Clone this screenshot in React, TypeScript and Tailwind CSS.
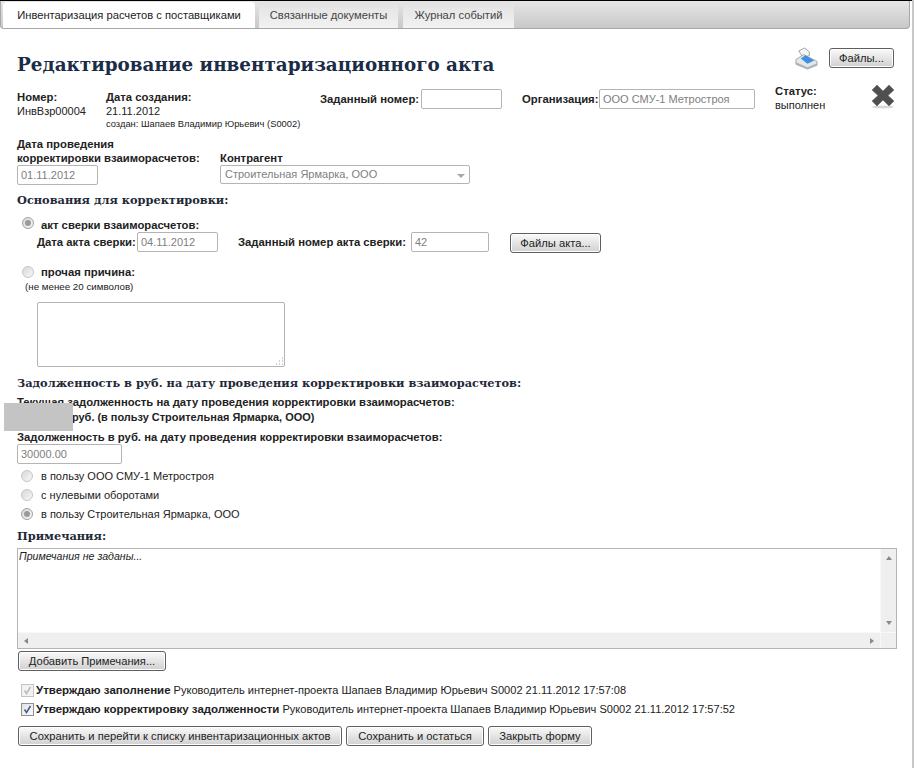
const sans = "font-['Liberation_Sans',Arial,sans-serif]";

const Field = ({ value, className }: { value?: string; className: string }) => (
  <div className={`h-[20px] border border-[#b4b4b4] rounded-[2px] bg-white pl-[3px] text-[11px] leading-[19px] text-[#808080] ${className}`}>
    {value}
  </div>
);

const Btn = ({ label, className }: { label: string; className: string }) => (
  <button className={`h-[20px] border border-[#5f5f5f] rounded-[3px] bg-gradient-to-b from-[#fafafa] to-[#d0d0d0] text-[11.2px] leading-[17px] text-[#222] text-center whitespace-nowrap shadow-[inset_0_0_0_1px_#fff] ${className}`}>
    {label}
  </button>
);

const Radio = ({ checked }: { checked?: boolean }) => (
  <span className={`w-[12px] h-[12px] shrink-0 rounded-full border bg-gradient-to-br from-[#d8d8d8] to-[#f8f8f8] flex items-center justify-center ${checked ? "border-[#a0a0a0]" : "border-[#c6c6c6]"}`}>
    {checked && <span className="w-[6px] h-[6px] rounded-full bg-[#9a9a9a]" />}
  </span>
);

const Heading = ({ children, className }: { children: string; className: string }) => (
  <h2 className={`font-['DejaVu_Serif',Georgia,serif] font-bold text-[11.35px] leading-[14px] text-[#1f2a38] ${className}`}>
    {children}
  </h2>
);

const Check = ({ disabled }: { disabled?: boolean }) => (
  <span className={`w-[13px] h-[13px] shrink-0 border flex items-center justify-center ${disabled ? "border-[#c4c4c4] bg-[#f2f2f2]" : "border-[#8e8f8f] bg-gradient-to-br from-[#e4e4e4] to-[#fafafa]"}`}>
    <svg viewBox="0 0 11 11" className="w-[11px] h-[11px]">
      <path d="M2.5 5.5 L4.5 8.5 L8.5 2" fill="none" stroke={disabled ? "#bdbdbd" : "#4a5f97"} strokeWidth="1.6" />
    </svg>
  </span>
);

const Printer = () => (
  <svg viewBox="0 0 24 24" className="w-[23px] h-[23px]">
    <path d="M4 4 L10 1 L15 5 L15 9 L8 11 Z" fill="#f4f4f4" stroke="#8f8f8f" strokeWidth="0.8" />
    <path d="M1 13 L9 8 L23 15 L23 19 L13 23 L1 18 Z" fill="#e4e7ea" stroke="#8d949c" strokeWidth="0.8" />
    <path d="M6 12 L11 8.5 L20 14 L13 17.5 Z" fill="#3f8fe0" />
    <path d="M1 16 L13 21 L23 17 L23 19 L13 23 L1 18 Z" fill="#aeb4bb" />
  </svg>
);

const Cross = () => (
  <svg viewBox="0 0 24 25" className="w-[24px] h-[25px]">
    <ellipse cx="12" cy="23" rx="11" ry="1.5" fill="#d8d8d8" />
    <path d="M1 6 L6 1 L12 7 L18 1 L23 6 L17 11.5 L23 17 L18 22 L12 16 L6 22 L1 17 L7 11.5 Z" fill="#4f4f4f" stroke="#6a6a6a" strokeWidth="0.6" strokeLinejoin="round" />
  </svg>
);

const Tab = ({ label, active, className }: { label: string; active?: boolean; className: string }) => (
  <div className={`h-[26px] rounded-t-[4px] text-center text-[11.2px] leading-[27px] ${active ? "bg-white text-[#222]" : "bg-gradient-to-b from-[#e2e2e2] to-[#f2f2f2] text-[#444]"} ${className}`}>
    {label}
  </div>
);

export default function App() {
  return (
    <div className={`${sans} relative w-[914px] h-[768px] bg-white text-[11px] leading-[14px] text-[#222] overflow-hidden border-r-2 border-[#c8c8c8]`}>
      <div className="h-px bg-black" />
      {/* tabs */}
      <div className="w-[910px] h-[28px] flex items-end pl-[2px] border border-t-0 border-[#a8a8a8] rounded-b-[4px] bg-gradient-to-b from-[#e6e6e6] to-[#c8c8c8]">
        <Tab label="Инвентаризация расчетов с поставщиками" active className="w-[252px] mr-[4px]" />
        <Tab label="Связанные документы" className="w-[139px] mr-[5px]" />
        <Tab label="Журнал событий" className="w-[111px]" />
      </div>

      <div className="px-[17px]">
        {/* title row */}
        <div className="flex items-start h-[55px]">
          <h1 className="mt-[22px] font-['DejaVu_Serif',Georgia,serif] font-bold text-[18.35px] leading-[27px] text-[#1b2c47]">
            Редактирование инвентаризационного акта
          </h1>
          <div className="ml-auto flex items-start mt-[18px] mr-px">
            <Printer />
            <Btn label="Файлы..." className="w-[65px] ml-[11px] mt-px" />
          </div>
        </div>

        {/* number row */}
        <div className="flex items-start h-[44px] mt-[5px]">
          <div className="w-[89px] pt-[1px]">
            <div className="font-bold text-[11.3px]">Номер:</div>
            <div>ИнвВзр00004</div>
          </div>
          <div className="w-[214px] pt-[1px]">
            <div className="font-bold text-[11.3px]">Дата создания:</div>
            <div>21.11.2012</div>
            <div className="text-[9.35px] leading-[12px]">создан: Шапаев Владимир Юрьевич (S0002)</div>
          </div>
          <div className="flex items-center w-[202px]">
            <span className="font-bold text-[11.3px] w-[101px]">Заданный номер:</span>
            <Field className="w-[81px]" />
          </div>
          <div className="flex items-center w-[253px]">
            <span className="font-bold text-[11.3px] w-[77px]">Организация:</span>
            <Field value="ООО СМУ-1 Метростроя" className="w-[156px]" />
          </div>
          <div className="w-[96px] -mt-[5px]">
            <div className="font-bold text-[11.3px]">Статус:</div>
            <div>выполнен</div>
          </div>
          <div className="-mt-[5px]"><Cross /></div>
        </div>

        {/* date and counterparty */}
        <div className="flex items-start mt-[4px]">
          <div className="w-[203px]">
            <div className="font-bold text-[11.3px]">Дата проведения<br />корректировки взаиморасчетов:</div>
            <Field value="01.11.2012" className="w-[81px]" />
          </div>
          <div className="pt-[14px]">
            <div className="font-bold text-[11.3px]">Контрагент</div>
            <div className="relative w-[250px] h-[19px] border border-[#b4b4b4] rounded-[2px] pl-[4px] text-[11px] leading-[17px] text-[#808080]">
              Строительная Ярмарка, ООО
              <span className="absolute right-[4px] top-[8px] w-0 h-0 border-x-[4px] border-x-transparent border-t-[4px] border-t-[#a8a8a8]" />
            </div>
          </div>
        </div>

        <Heading className="mt-[8px]">Основания для корректировки:</Heading>

        <div className="flex items-center mt-[9px] ml-[5px] h-[14px]">
          <Radio checked />
          <span className="ml-[7px] mt-[3px] font-bold text-[11.3px]">акт сверки взаиморасчетов:</span>
        </div>
        <div className="flex items-center ml-[20px] mt-[1px]">
          <span className="font-bold text-[11.3px] w-[100px]">Дата акта сверки:</span>
          <Field value="04.11.2012" className="w-[81px]" />
          <span className="font-bold text-[11.3px] ml-[20px] w-[173px]">Заданный номер акта сверки:</span>
          <Field value="42" className="w-[78px]" />
          <Btn label="Файлы акта..." className="w-[91px] ml-[21px] mt-[2px]" />
        </div>

        <div className="flex items-center mt-[12px] ml-[5px] h-[14px]">
          <Radio />
          <span className="ml-[7px] font-bold text-[11.3px]">прочая причина:</span>
        </div>
        <div className="ml-[8px] mt-[2px] text-[9.75px] leading-[12px]">(не менее 20 символов)</div>

        <div className="relative ml-[20px] mt-[9px] w-[248px] h-[65px] border border-[#b4b4b4] rounded-[2px]">
          <svg viewBox="0 0 8 8" className="absolute right-px bottom-px w-[8px] h-[8px]">
            <path d="M1 7h1M4 7h1M7 7h1M4 4h1M7 4h1M7 1h1" stroke="#a0a0a0" strokeWidth="1" />
          </svg>
        </div>

        <Heading className="mt-[9px]">Задолженность в руб. на дату проведения корректировки взаиморасчетов:</Heading>

        <div className="relative font-bold text-[11.3px] mt-[5px]">
          <div className="leading-[15px]">Текущая задолженность на дату проведения корректировки взаиморасчетов:</div>
          <div className="pl-[55px] leading-[15px] text-[10.95px]">руб. (в пользу Строительная Ярмарка, ООО)</div>
          <div className="absolute left-[-13px] top-[8px] w-[69px] h-[28px] bg-[#c4c4c4]" />
        </div>

        <div className="font-bold text-[11.3px] mt-[5px]">Задолженность в руб. на дату проведения корректировки взаиморасчетов:</div>
        <Field value="30000.00" className="w-[105px]" />

        <div className="ml-[4px] mt-[5px] flex flex-col gap-[5px]">
          <div className="flex items-center h-[14px]"><Radio /><span className="ml-[8px]">в пользу ООО СМУ-1 Метростроя</span></div>
          <div className="flex items-center h-[14px]"><Radio /><span className="ml-[8px]">с нулевыми оборотами</span></div>
          <div className="flex items-center h-[14px]"><Radio checked /><span className="ml-[8px]">в пользу Строительная Ярмарка, ООО</span></div>
        </div>

        <Heading className="mt-[8px]">Примечания:</Heading>

        {/* notes box with scrollbars */}
        <div className="mt-[5px] w-[880px] h-[101px] border border-[#b4b4b4] flex flex-col">
          <div className="flex flex-1">
            <div className="flex-1 pl-px italic text-[10.6px] leading-[15px]">Примечания не заданы...</div>
            <div className="w-[16px] bg-[#efefef] flex flex-col items-center justify-between py-[7px] border-l border-[#f8f8f8]">
              <span className="w-0 h-0 border-x-[3.5px] border-x-transparent border-b-[4px] border-b-[#8a8a8a]" />
              <span className="w-0 h-0 border-x-[3.5px] border-x-transparent border-t-[4px] border-t-[#8a8a8a]" />
            </div>
          </div>
          <div className="h-[16px] flex bg-[#efefef] border-t border-[#f8f8f8]">
            <div className="flex-1 flex items-center justify-between px-[6px]">
              <span className="w-0 h-0 border-y-[3.5px] border-y-transparent border-r-[4px] border-r-[#8a8a8a]" />
              <span className="w-0 h-0 border-y-[3.5px] border-y-transparent border-l-[4px] border-l-[#8a8a8a]" />
            </div>
            <div className="w-[16px] border-l border-[#f8f8f8]" />
          </div>
        </div>

        <Btn label="Добавить Примечания..." className="block w-[148px] ml-px mt-[2px]" />

        <div className="flex items-center mt-[12px] ml-[4px] h-[14px]">
          <Check disabled />
          <span className="ml-[2px] whitespace-nowrap text-[11.06px]"><b className="text-[11.5px]">Утверждаю заполнение</b> Руководитель интернет-проекта Шапаев Владимир Юрьевич S0002 21.11.2012 17:57:08</span>
        </div>
        <div className="flex items-center mt-[5px] ml-[4px] h-[14px]">
          <Check />
          <span className="ml-[2px] whitespace-nowrap text-[11.06px]"><b className="text-[11.5px]">Утверждаю корректировку задолженности</b> Руководитель интернет-проекта Шапаев Владимир Юрьевич S0002 21.11.2012 17:57:52</span>
        </div>

        <div className="flex gap-[4px] ml-px mt-[10px]">
          <Btn label="Сохранить и перейти к списку инвентаризационных актов" className="w-[324px]" />
          <Btn label="Сохранить и остаться" className="w-[138px]" />
          <Btn label="Закрыть форму" className="w-[104px]" />
        </div>
      </div>
    </div>
  );
}
